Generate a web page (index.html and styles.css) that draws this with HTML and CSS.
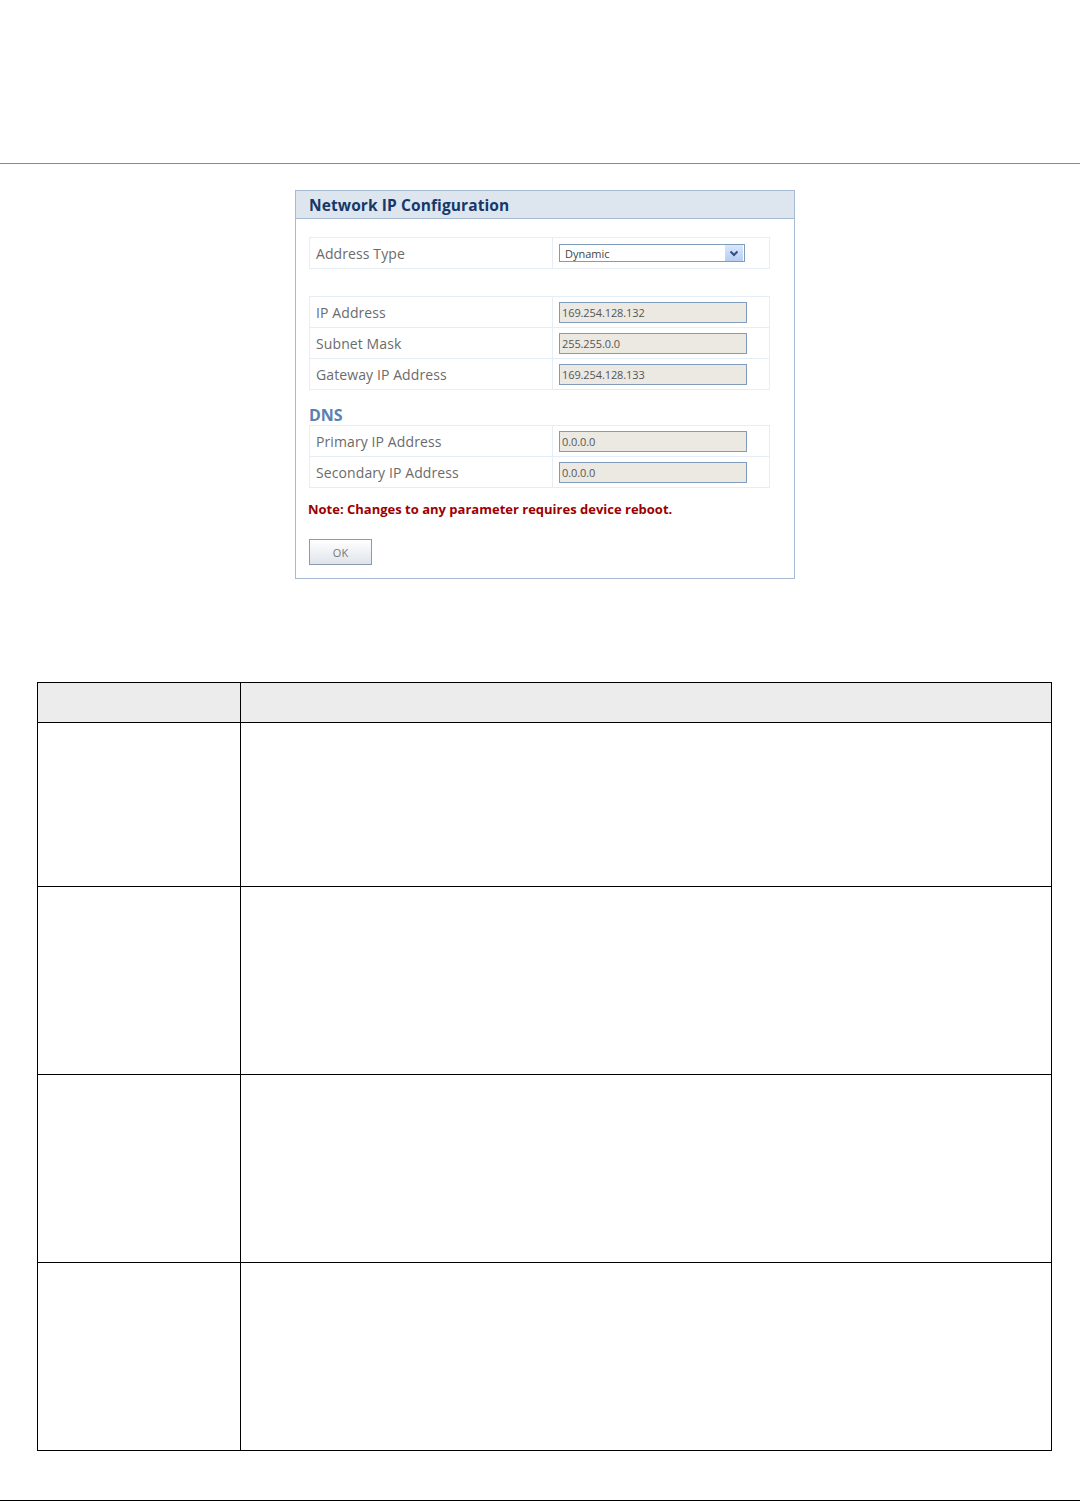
FILE: index.html
```html
<!DOCTYPE html>
<html lang="en">
<head>
  <meta charset="UTF-8" />
  <title>Network IP Configuration</title>
  <link rel="stylesheet" href="styles.css">
</head>
<body>
  <div class="top-space"></div>
  <div class="rule"></div>

  <div class="panel">
    <div class="panel-head">Network IP Configuration</div>
    <div class="panel-body">
      <table class="grp first">
        <tr>
          <td class="lbl">Address Type</td>
          <td class="val">
            <div class="select">
              <span>Dynamic</span>
              <span class="arrow">
                <svg width="10" height="7" viewBox="0 0 10 7"><path d="M1.5 1.5 L5 5 L8.5 1.5" fill="none" stroke="#2d4f86" stroke-width="2"/></svg>
              </span>
            </div>
          </td>
        </tr>
      </table>

      <table class="grp">
        <tr>
          <td class="lbl">IP Address</td>
          <td class="val"><input class="ro" type="text" value="169.254.128.132" readonly></td>
        </tr>
        <tr>
          <td class="lbl">Subnet Mask</td>
          <td class="val"><input class="ro" type="text" value="255.255.0.0" readonly></td>
        </tr>
        <tr>
          <td class="lbl">Gateway IP Address</td>
          <td class="val"><input class="ro" type="text" value="169.254.128.133" readonly></td>
        </tr>
      </table>

      <div class="dns">DNS</div>
      <table class="grp">
        <tr>
          <td class="lbl">Primary IP Address</td>
          <td class="val"><input class="ro" type="text" value="0.0.0.0" readonly></td>
        </tr>
        <tr>
          <td class="lbl">Secondary IP Address</td>
          <td class="val"><input class="ro" type="text" value="0.0.0.0" readonly></td>
        </tr>
      </table>

      <p class="note">Note: Changes to any parameter requires device reboot.</p>
      <button class="ok" type="button">OK</button>
    </div>
  </div>

  <table class="desc">
    <thead>
      <tr>
        <th class="c1"></th>
        <th></th>
      </tr>
    </thead>
    <tbody>
      <tr class="r1"><td></td><td></td></tr>
      <tr class="r2"><td></td><td></td></tr>
      <tr class="r2"><td></td><td></td></tr>
      <tr class="r2"><td></td><td></td></tr>
    </tbody>
  </table>

  <div class="foot-rule"></div>
</body>
</html>
```

FILE: styles.css
```css
body {
  margin: 0;
  background: #fff;
  font-family: "Open Sans", "DejaVu Sans", sans-serif;
}
.top-space {
  height: 163px;
}
.rule {
  width: 1080px;
  height: 1px;
  background: #8a8a8a;
}
.panel {
  width: 498px;
  margin: 26px auto 0;
  border: 1px solid #a7bad3;
}
.panel-head {
  height: 27px;
  line-height: 29px;
  background: #dde5ef;
  border-bottom: 1px solid #a7bad3;
  padding-left: 13px;
  font-size: 15.5px;
  font-weight: bold;
  color: #15386a;
  letter-spacing: 0.1px;
}
.panel-body {
  padding: 18px 24px 13px 13px;
}
.grp {
  width: 461px;
  border-collapse: collapse;
  border: 1px solid #e7edf4;
}
.grp.first {
  margin-bottom: 27px;
}
.grp td {
  height: 30px;
  border: 1px solid #e7edf4;
  padding: 0;
}
.lbl {
  width: 236px;
  padding-left: 6px !important;
  font-size: 14px;
  color: #6b6b6b;
  letter-spacing: 0.1px;
}
.val {
  padding-left: 6px !important;
}
.select {
  width: 186px;
  height: 18px;
  border: 1px solid #7f9db9;
  display: flex;
  align-items: center;
  justify-content: space-between;
  font-size: 11px;
  color: #444;
  padding-left: 5px;
  box-sizing: border-box;
}
.arrow {
  width: 18px;
  height: 16px;
  background: linear-gradient(#dbe6fb, #b8cdf3);
  display: flex;
  align-items: center;
  justify-content: center;
  margin-right: 1px;
}
.ro {
  width: 188px;
  height: 21px;
  box-sizing: border-box;
  border: 1px solid #7f9db9;
  background: #ebe9e2;
  font-family: "Open Sans", "DejaVu Sans", sans-serif;
  font-size: 11px;
  color: #555;
  letter-spacing: -0.1px;
  padding: 0 2px;
  display: block;
}
.dns {
  margin-top: 15px;
  font-size: 16px;
  font-weight: bold;
  color: #5a80b2;
  line-height: 20px;
  margin-bottom: 0;
}
.note {
  margin: 12px 0 0 -1px;
  font-size: 13px;
  font-weight: bold;
  color: #9c0000;
  letter-spacing: 0;
}
.ok {
  margin-top: 21px;
  width: 63px;
  height: 26px;
  border: 1px solid #8a9aaf;
  background: linear-gradient(#ffffff, #dfe4ea);
  font-family: "Open Sans", "DejaVu Sans", sans-serif;
  font-size: 11px;
  color: #777;
  padding: 0;
  display: block;
}
.desc {
  width: 1015px;
  margin: 103px 0 0 37px;
  border-collapse: collapse;
}
.desc th,
.desc td {
  border: 1.5px solid #000;
  padding: 0;
}
.desc th {
  height: 39px;
  background: #ececec;
}
.desc .c1 {
  width: 202px;
}
.desc .r1 td {
  height: 163px;
}
.desc .r2 td {
  height: 187px;
}
.foot-rule {
  width: 1080px;
  height: 1px;
  background: #000;
  margin-top: 49px;
}
```
